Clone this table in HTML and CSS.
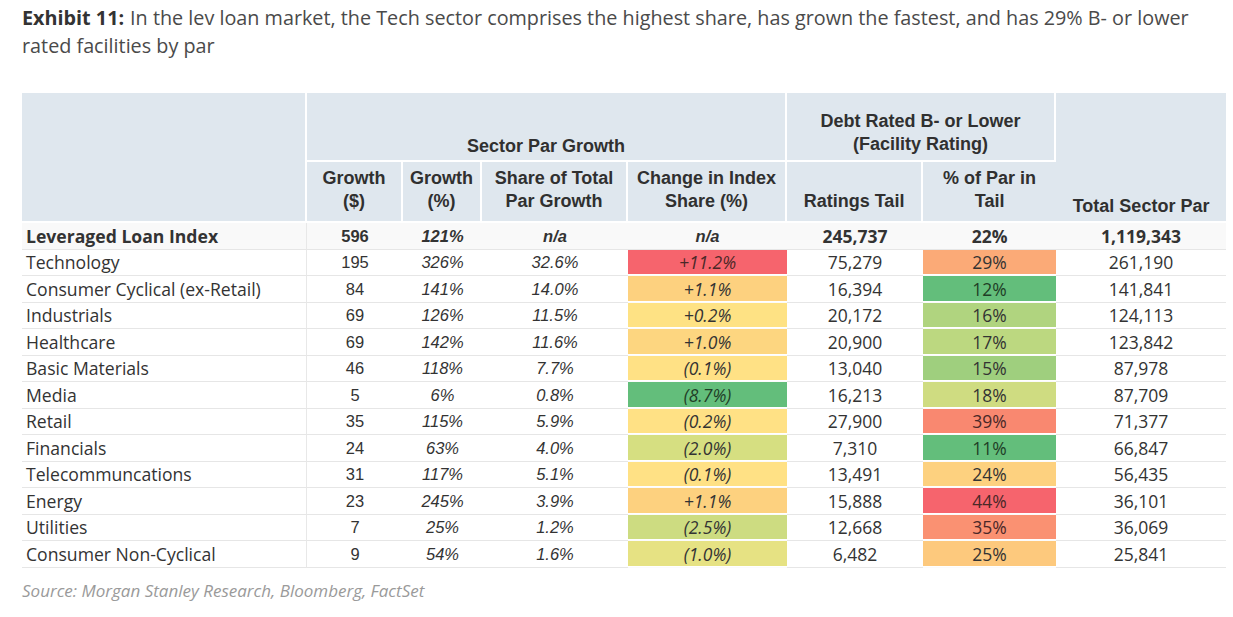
FILE: index.html
```html
<!DOCTYPE html>
<html>
<head>
<meta charset="utf-8">
<link rel="stylesheet" href="styles.css">
</head>
<body>
<div class="page">
  <p class="title"><span class="lead">Exhibit 11:</span><span class="rest">In the lev loan market, the Tech sector comprises the highest share, has grown the fastest, and has 29% B- or lower rated facilities by par</span></p>
  <table class="grid">
    <colgroup>
      <col class="c-name"><col class="c-g1"><col class="c-g2"><col class="c-share"><col class="c-chg"><col class="c-tail"><col class="c-pct"><col class="c-total">
    </colgroup>
    <thead>
      <tr class="h1">
        <th rowspan="2" class="blank"></th>
        <th colspan="4" class="spg">Sector Par Growth</th>
        <th colspan="2">Debt Rated B- or Lower<br>(Facility Rating)</th>
        <th rowspan="2" class="tot">Total Sector Par</th>
      </tr>
      <tr class="h2">
        <th>Growth<br>($)</th>
        <th>Growth<br>(%)</th>
        <th>Share of Total<br>Par Growth</th>
        <th>Change in Index<br>Share (%)</th>
        <th>Ratings Tail</th>
        <th>% of Par in<br>Tail</th>
      </tr>
    </thead>
    <tbody>
      <tr class="index">
        <td class="name">Leveraged Loan Index</td><td class="ar">596</td><td class="ar it">121%</td><td class="ar it">n/a</td><td class="ar it">n/a</td><td class="sg">245,737</td><td class="sg">22%</td><td class="sg">1,119,343</td>
      </tr>
      <tr><td class="name">Technology</td><td class="ar">195</td><td class="ar it">326%</td><td class="ar it">32.6%</td><td class="sg it heat h-red dk">+11.2%</td><td class="sg">75,279</td><td class="sg heat h-or">29%</td><td class="sg">261,190</td></tr>
      <tr><td class="name">Consumer Cyclical (ex-Retail)</td><td class="ar">84</td><td class="ar it">141%</td><td class="ar it">14.0%</td><td class="sg it heat h-lo">+1.1%</td><td class="sg">16,394</td><td class="sg heat h-g1">12%</td><td class="sg">141,841</td></tr>
      <tr><td class="name">Industrials</td><td class="ar">69</td><td class="ar it">126%</td><td class="ar it">11.5%</td><td class="sg it heat h-y2">+0.2%</td><td class="sg">20,172</td><td class="sg heat h-g16">16%</td><td class="sg">124,113</td></tr>
      <tr><td class="name">Healthcare</td><td class="ar">69</td><td class="ar it">142%</td><td class="ar it">11.6%</td><td class="sg it heat h-lo2">+1.0%</td><td class="sg">20,900</td><td class="sg heat h-g17">17%</td><td class="sg">123,842</td></tr>
      <tr><td class="name">Basic Materials</td><td class="ar">46</td><td class="ar it">118%</td><td class="ar it">7.7%</td><td class="sg it heat h-y">(0.1%)</td><td class="sg">13,040</td><td class="sg heat h-g15">15%</td><td class="sg">87,978</td></tr>
      <tr><td class="name">Media</td><td class="ar">5</td><td class="ar it">6%</td><td class="ar it">0.8%</td><td class="sg it heat h-g1">(8.7%)</td><td class="sg">16,213</td><td class="sg heat h-g18">18%</td><td class="sg">87,709</td></tr>
      <tr><td class="name">Retail</td><td class="ar">35</td><td class="ar it">115%</td><td class="ar it">5.9%</td><td class="sg it heat h-y">(0.2%)</td><td class="sg">27,900</td><td class="sg heat h-r39 dk">39%</td><td class="sg">71,377</td></tr>
      <tr><td class="name">Financials</td><td class="ar">24</td><td class="ar it">63%</td><td class="ar it">4.0%</td><td class="sg it heat h-yg">(2.0%)</td><td class="sg">7,310</td><td class="sg heat h-g1">11%</td><td class="sg">66,847</td></tr>
      <tr><td class="name">Telecommuncations</td><td class="ar">31</td><td class="ar it">117%</td><td class="ar it">5.1%</td><td class="sg it heat h-y">(0.1%)</td><td class="sg">13,491</td><td class="sg heat h-lo">24%</td><td class="sg">56,435</td></tr>
      <tr><td class="name">Energy</td><td class="ar">23</td><td class="ar it">245%</td><td class="ar it">3.9%</td><td class="sg it heat h-lo">+1.1%</td><td class="sg">15,888</td><td class="sg heat h-red dk">44%</td><td class="sg">36,101</td></tr>
      <tr><td class="name">Utilities</td><td class="ar">7</td><td class="ar it">25%</td><td class="ar it">1.2%</td><td class="sg it heat h-yg2">(2.5%)</td><td class="sg">12,668</td><td class="sg heat h-r35 dk">35%</td><td class="sg">36,069</td></tr>
      <tr><td class="name">Consumer Non-Cyclical</td><td class="ar">9</td><td class="ar it">54%</td><td class="ar it">1.6%</td><td class="sg it heat h-yg3">(1.0%)</td><td class="sg">6,482</td><td class="sg heat h-o25">25%</td><td class="sg">25,841</td></tr>
    </tbody>
  </table>
  <p class="source">Source: Morgan Stanley Research, Bloomberg, FactSet</p>
</div>
</body>
</html>
```
FILE: styles.css
```css
html, body {
  margin: 0;
  padding: 0;
  background: #ffffff;
}

.page {
  padding: 4px 0 0 22px;
  width: 1204px;
}

.title {
  margin: 0;
  width: 1190px;
  font-family: "Open Sans", "Noto Sans", sans-serif;
  font-size: 19.8px;
  line-height: 28px;
  color: #4a4a4a;
}

.title .lead {
  color: #333333;
  font-weight: 700;
  margin-right: 6px;
}

.grid {
  margin-top: 33px;
  border-collapse: separate;
  border-spacing: 0;
  table-layout: fixed;
  width: 1204px;
  color: #333333;
}

.c-name { width: 285px; }
.c-g1 { width: 96px; }
.c-g2 { width: 79px; }
.c-share { width: 146px; }
.c-chg { width: 159px; }
.c-tail { width: 136px; }
.c-pct { width: 133px; }
.c-total { width: 170px; }

.grid th {
  background: #dfe7ee;
  font-family: "Liberation Sans", Arial, sans-serif;
  font-weight: 700;
  font-size: 18px;
  line-height: 23px;
  color: #303030;
  text-align: center;
  vertical-align: bottom;
  padding: 0 0 4px 0;
  border-right: 2px solid #ffffff;
  border-bottom: 2px solid #ffffff;
}

.grid th:last-child {
  border-right: none;
}

.h1 th {
  height: 63px;
}

.grid th.spg {
  padding-bottom: 2px;
}

.h2 th {
  height: 51px;
  padding-bottom: 8px;
}

.grid th.tot {
  padding-bottom: 3px;
}

.grid td {
  height: 25.5px;
  padding: 0;
  text-align: center;
  vertical-align: middle;
  font-size: 16px;
  line-height: 20px;
  border-bottom: 1px solid #e6e6e6;
  white-space: nowrap;
}

.grid td.name {
  text-align: left;
  padding-left: 4px;
  font-family: "Open Sans", "Noto Sans", sans-serif;
  font-size: 17.6px;
  border-right: 1px solid #e8e8e8;
}

.grid td.ar {
  font-family: "Liberation Sans", Arial, sans-serif;
  font-size: 16.5px;
}

.grid td.sg {
  font-family: "Open Sans", "Noto Sans", sans-serif;
  font-size: 17.5px;
}

.grid td.it {
  font-style: italic;
}

.index td {
  background: #f9f9f9;
  font-weight: 700;
}

.heat {
  border-bottom: 1px solid #fbfbfb !important;
  box-shadow: inset 0 -1px 0 #ffffff;
}

.dk { color: #4a2828; }

.h-red { background: #f6646d; }
.h-or { background: #fbaa77; }
.h-lo { background: #fdd17f; }
.h-lo2 { background: #fdd680; }
.h-y { background: #ffe185; }
.h-y2 { background: #fee284; }
.h-g1 { background: #63be7b; color: #1f3d26; }
.h-g16 { background: #b0d47f; }
.h-g17 { background: #bcd880; }
.h-g15 { background: #9fcf7e; }
.h-g18 { background: #cfdc81; }
.h-r39 { background: #f98870; }
.h-r35 { background: #fa9172; }
.h-o25 { background: #fdc97d; }
.h-yg { background: #d6df81; }
.h-yg2 { background: #cddc81; }
.h-yg3 { background: #e6e283; }

.source {
  margin: 12px 0 0 0;
  font-family: "Open Sans", "Noto Sans", sans-serif;
  font-style: italic;
  font-size: 17px;
  line-height: 22px;
  color: #9a9a9a;
}
```
